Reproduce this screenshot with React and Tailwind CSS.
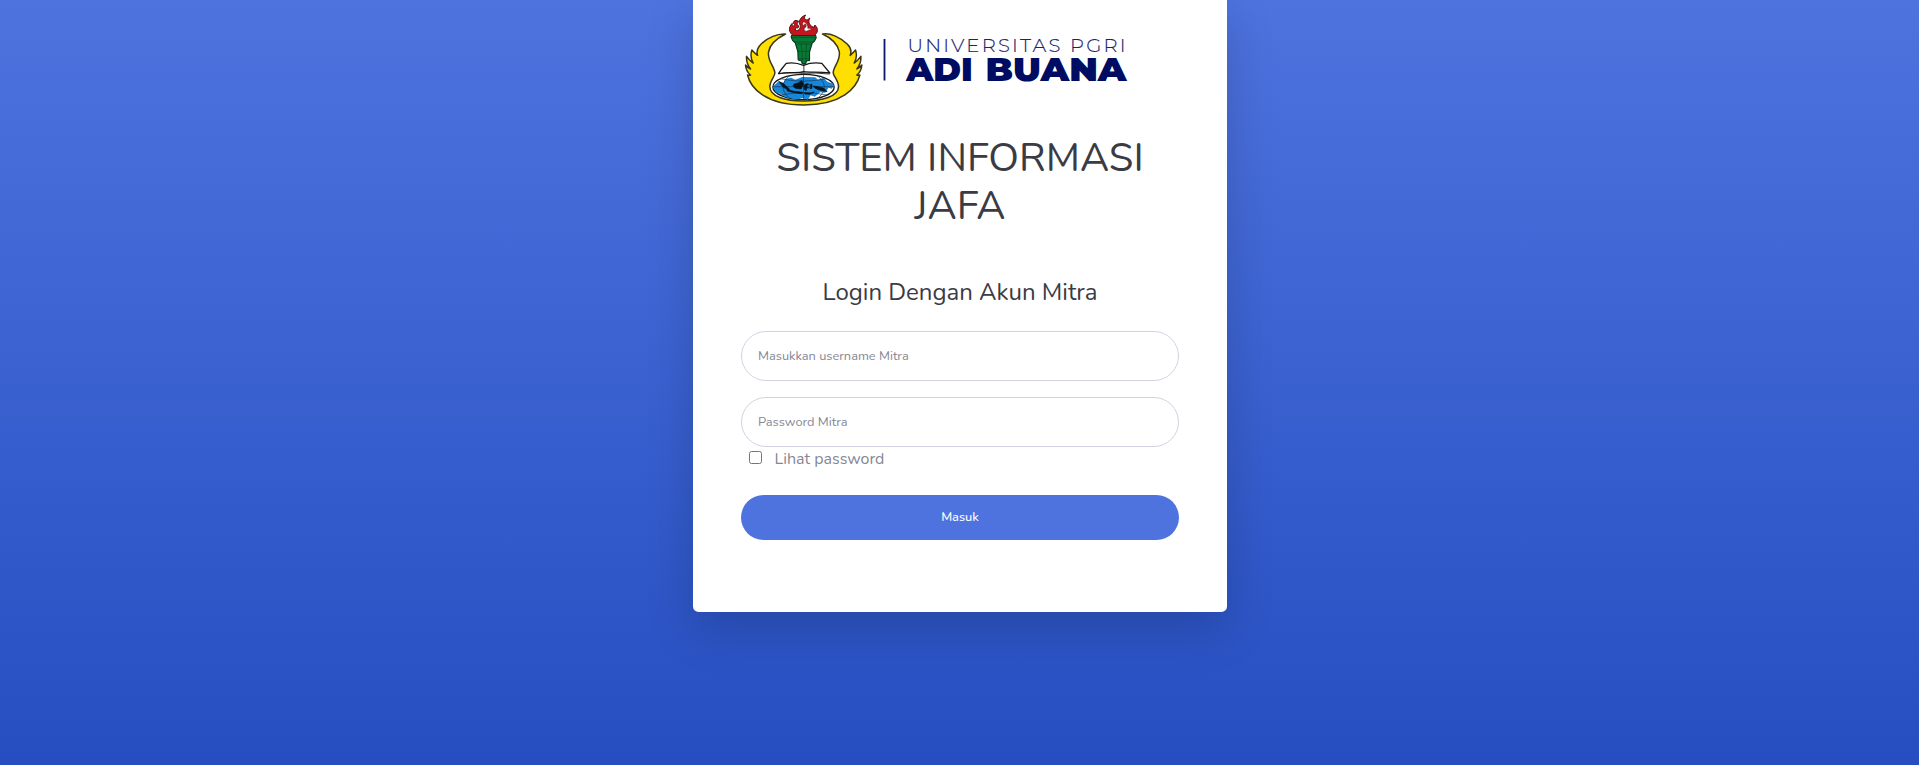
import React from 'react'

function Emblem() {
  return (
    <g transform="translate(-5.8 0.7) scale(0.3333)" strokeLinejoin="round" strokeLinecap="round">
      <path
        d="M151 100 C128 98 97 111 78 130 C67 141 63 152 67 164 C60 159 55 154 50 148 C46 160 47 175 54 187 C46 182 40 175 34 167 C33 180 38 194 46 205 C41 203 36 199 31 193 C32 206 37 216 46 223 C43 224 40 224 37 223 C46 262 91 313 206 313 C320 313 364 262 374 223 C371 224 368 224 365 223 C374 216 379 206 380 193 C375 199 370 203 365 205 C373 194 378 180 377 167 C371 175 365 182 357 187 C364 175 365 160 361 148 C356 154 351 159 345 164 C350 152 347 141 336 130 C316 111 286 96 262 100 C286 111 306 128 312 152 C318 178 294 198 294 216 C294 226 310 238 310 258 C310 287 261 301 205 301 C149 301 104 287 104 258 C104 240 119 228 119 217 C119 199 96 180 100 154 C104 129 127 112 151 100 Z"
        fill="#ffdf00" stroke="#393719" strokeWidth="4.5"
      />
      <clipPath id="globe"><ellipse cx="205" cy="259" rx="92" ry="38" /></clipPath>
      <ellipse cx="205" cy="259" rx="92" ry="38" fill="#fff" stroke="#171717" strokeWidth="4" />
      <g clipPath="url(#globe)">
        <path d="M112 258 L128 244 L145 246 L150 235 L168 231 L180 237 L201 229 L240 230 L248 237 L264 232 L278 244 L298 250 L290 264 L280 261 L270 276 L255 275 L239 288 L226 284 L218 298 L201 292 L186 297 L151 291 L140 281 L123 276 Z" fill="#1687d9" />
        <path d="M205 220 V298 M113 258 H297 M164 225 C136 244 137 274 164 293 M246 225 C274 244 275 274 246 293 M135 234 Q205 249 275 234 M136 283 Q205 269 275 283" fill="none" stroke="#173957" strokeWidth="2" />
        <path d="M131 242 L146 250 L163 265 L160 269 L145 260 Z M157 267 L177 272 L202 275 L201 279 L176 276 L157 271 Z M177 250 L191 246 L199 239 L205 250 L198 265 L181 263 L174 257 Z M207 253 L215 249 L222 251 L213 255 L222 262 L216 261 L212 270 L207 265 Z M208 276 L225 277 L237 274 L225 281 L210 280 Z M235 256 L250 258 L266 263 L276 273 L262 270 L249 267 L239 262 Z M225 252 L230 250 L230 263 L226 264 Z" fill="#06131d" stroke="#06131d" strokeWidth="2" />
      </g>
      <path d="M153 188 C173 184 190 188 205 194 C222 187 239 185 260 188 L284 217 C252 212 225 216 206 213 C187 219 157 212 130 219 L137 208 Z" fill="#fff" stroke="#171717" strokeWidth="4" />
      <path d="M133 219 Q174 214 204 218 Q238 215 282 220 M206 190 V215" fill="none" stroke="#171717" strokeWidth="2.5" />
      <path d="M170 103 L241 103 L243 111 L238 121 L231 127 L223 154 L223 179 L214 181 L211 189 L201 189 L199 181 L189 178 L188 153 L180 126 L172 119 L168 109 Z" fill="#087a37" stroke="#07391f" strokeWidth="3.5" />
      <path d="M171 110 H240 M180 124 H232 M186 130 H226 M188 152 H222 M190 174 H221 M198 131 L200 151 M214 131 L212 151 M201 154 V179 M212 154 V179" fill="none" stroke="#064820" strokeWidth="2" />
      <path d="M174 104 C160 96 159 80 171 68 C170 76 176 78 180 73 C172 69 172 62 182 59 L191 62 C184 68 185 72 191 76 L188 82 C183 80 179 82 181 89 C190 92 197 82 195 74 C190 63 193 50 211 43 C204 53 210 57 216 58 L224 52 C217 66 224 70 229 77 L237 80 L239 73 C251 84 248 97 238 104 Z" fill="#c5161d" stroke="#521315" strokeWidth="3" />
      <path d="M204 64 C200 69 202 73 206 75 L210 69 C216 75 212 80 206 84 C207 91 212 93 216 91 C220 88 224 87 228 88 C228 83 223 81 218 83 C219 75 216 70 212 67" fill="#fff" stroke="#521315" strokeWidth="2" />
    </g>
  )
}

function Logo() {
  return (
    <svg className="block h-[115px] w-full" viewBox="0 0 438 115" role="img">
      <Emblem />
      <rect x="142.6" y="39" width="1.8" height="41.5" fill="#0b176b" />
      <g className="font-['Montserrat','Inter',sans-serif]" fill="#000b62">
        <text x="166.5" y="52" fontSize="19.5" fontWeight="300" textLength="218" lengthAdjust="spacing" fill="#17246f" stroke="#17246f" strokeWidth="0.15">UNIVERSITAS PGRI</text>
        <text x="165.2" y="80.5" fontSize="31.5" fontWeight="900" textLength="66.5" lengthAdjust="spacingAndGlyphs">ADI</text>
        <text x="244.5" y="80.5" fontSize="31.5" fontWeight="900" textLength="141" lengthAdjust="spacingAndGlyphs">BUANA</text>
      </g>
    </svg>
  )
}

const field =
  'block h-[50px] w-full rounded-full border border-[#d1d3e2] bg-white pr-4 pl-[16.5px] text-[12.8px] text-[#6e707e] outline-none placeholder:text-[#858796] placeholder:opacity-100'

export default function App() {
  return (
    <div className="flex h-[765px] justify-center overflow-hidden bg-linear-to-b from-[#4e73df] from-0% to-[#264ec1] to-100% font-['Nunito','Lato',sans-serif]">
      <main className="h-[612px] w-[534px] rounded-b-[5.6px] bg-white px-12 shadow-[0_16px_48px_rgba(0,0,0,0.175)]">
        <Logo />
        <h1 className="mt-[19px] pl-px text-center text-[40px] leading-[48px] font-normal text-[#3a3b45]">
          SISTEM INFORMASI
          <br />
          JAFA
        </h1>
        <h2 className="mt-[48px] pl-px text-center text-[24px] leading-[29px] font-normal text-[#3a3b45]">
          Login Dengan Akun Mitra
        </h2>
        <form className="mt-6">
          <input className={field} placeholder="Masukkan username Mitra" />
          <input className={`${field} mt-4`} type="password" placeholder="Password Mitra" />
          <label className="flex h-6 items-center gap-[13px] pl-2 text-[16px] leading-6 text-[#858796]">
            <input type="checkbox" className="-mt-[3px] size-[13px]" />
            Lihat password
          </label>
          <button type="button" className="mt-6 block h-[45px] w-full rounded-full bg-[#4e73df] pl-px text-[12.8px] font-medium text-white">
            Masuk
          </button>
        </form>
      </main>
    </div>
  )
}
